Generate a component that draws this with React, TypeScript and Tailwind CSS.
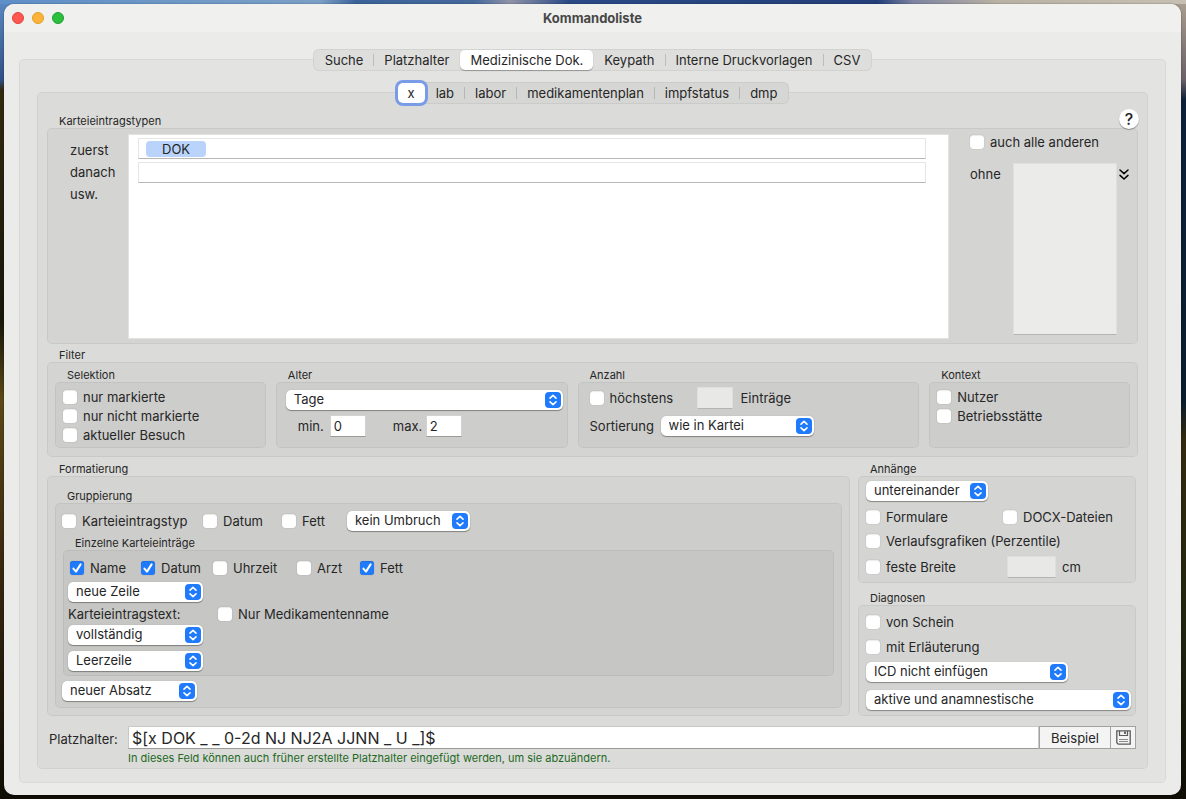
import { useId } from 'react';
import type { ReactNode } from 'react';
import { clsx } from 'clsx';

const MAIN_TABS = ['Suche', 'Platzhalter', 'Medizinische Dok.', 'Keypath', 'Interne Druckvorlagen', 'CSV'];
const SUB_TABS = ['x', 'lab', 'labor', 'medikamentenplan', 'impfstatus', 'dmp'];

interface TabBarProps {
  tabs: string[];
  active: string;
  focused?: boolean;
  label: string;
}

/** Segmented control that straddles the top edge of its frame */
function TabBar({ tabs, active, focused, label }: TabBarProps) {
  const activeIndex = tabs.indexOf(active);

  return (
    <div
      role="tablist"
      aria-label={label}
      className={clsx(
        'relative z-10 -mb-3 flex h-[22px] items-center self-center rounded-md border border-black/5 px-px',
        focused ? 'bg-[#d6d6d4]' : 'bg-[#dededc]'
      )}
    >
      {tabs.map((tab, i) => (
        <div key={tab} className="flex h-full items-center">
          {i > 0 && (
            <span
              className={clsx('h-3 w-px', i !== activeIndex && i !== activeIndex + 1 && 'bg-black/15')}
            />
          )}
          <button
            type="button"
            role="tab"
            aria-selected={tab === active}
            className={clsx(
              'h-5 rounded-[5px] px-2.5 whitespace-nowrap',
              tab === active && 'bg-white shadow-[0_1px_1px_rgba(0,0,0,0.3)]',
              tab === active && focused && 'ring-3 ring-[#7a9ce6]'
            )}
          >
            {tab}
          </button>
        </div>
      ))}
    </div>
  );
}

interface CheckProps {
  label: string;
  checked?: boolean;
  className?: string;
}

function Check({ label, checked, className }: CheckProps) {
  return (
    <label className={clsx('flex h-[19px] items-center gap-1.5 whitespace-nowrap', className)}>
      <span className="relative flex size-3.5 shrink-0">
        <input
          type="checkbox"
          defaultChecked={checked}
          className="peer size-3.5 appearance-none rounded-[3px] bg-white shadow-[0_0_1px_rgba(0,0,0,0.35),inset_0_1px_1px_rgba(0,0,0,0.08)] checked:bg-[#1f7bfb]"
        />
        <svg
          viewBox="0 0 14 14"
          className="pointer-events-none absolute inset-0 hidden size-3.5 peer-checked:block"
          fill="none"
          stroke="white"
          strokeWidth="2"
          strokeLinecap="round"
          strokeLinejoin="round"
          aria-hidden="true"
        >
          <path d="M3.4 7.6 6 10.6 10.6 3.4" />
        </svg>
      </span>
      {label}
    </label>
  );
}

interface SelectProps {
  value: string;
  label: string;
  className?: string;
}

function Select({ value, label, className }: SelectProps) {
  return (
    <div className={clsx('relative h-5', className)}>
      <select
        aria-label={label}
        className="block h-5 w-full appearance-none rounded-[5px] bg-white pr-6 pb-px pl-2 leading-[19px] shadow-[0_1px_1px_rgba(0,0,0,0.35),0_0_1px_rgba(0,0,0,0.25)]"
      >
        <option>{value}</option>
      </select>
      <svg
        viewBox="0 0 16 16"
        className="pointer-events-none absolute top-0.5 right-0.5 size-4 rounded-[4px] bg-[#1f7bfb]"
        fill="none"
        stroke="white"
        strokeWidth="1.6"
        strokeLinecap="round"
        strokeLinejoin="round"
        aria-hidden="true"
      >
        <path d="M5 6.2 8 3.4 11 6.2M5 9.8 8 12.6 11 9.8" />
      </svg>
    </div>
  );
}

interface GroupProps {
  title: string;
  className?: string;
  boxClassName?: string;
  children: ReactNode;
}

/** Titled group box; the tint adds up with every nesting level */
function Group({ title, className, boxClassName, children }: GroupProps) {
  const id = useId();

  return (
    <div role="group" aria-labelledby={id} className={clsx('flex flex-col', className)}>
      <h3 id={id} className="px-3 text-[11px] leading-[14px]">
        {title}
      </h3>
      <div className={clsx('grow rounded-[5px] border border-black/5 bg-black/[0.033]', boxClassName)}>
        {children}
      </div>
    </div>
  );
}

const FIELD = 'bg-white border border-[#d2d2d0] border-b-[#9a9a98]';
const DISABLED_FIELD = 'bg-[#e8e8e6] border border-[#dededc] border-b-[#b4b4b2]';

function EntryTypes() {
  return (
    <Group title="Karteieintragstypen" boxClassName="flex pt-[3px] pb-1">
      <div className="flex w-20 shrink-0 flex-col pt-[7px] pl-[22px] leading-[22px]">
        <span>zuerst</span>
        <span>danach</span>
        <span>usw.</span>
      </div>
      <div className="mt-0.5 flex h-[205px] grow flex-col gap-[3px] border border-[#e2e2e0] bg-white pt-[3px] pr-[22px] pl-[9px]">
        <div className="flex h-[21px] items-center border border-[#e6e6e4] border-b-[#b8b8b6] pl-[7px]">
          <span className="rounded-[4px] bg-[#b9d3fb] px-4 leading-4">DOK</span>
        </div>
        <input
          aria-label="danach"
          className="h-[21px] border border-[#e6e6e4] border-b-[#b8b8b6] px-2"
        />
      </div>
      <div className="ml-[21px] flex w-[167px] shrink-0 flex-col">
        <Check label="auch alle anderen" />
        <div className="mt-3 flex">
          <span className="w-[43px] leading-[22px]">ohne</span>
          <textarea
            aria-label="ohne"
            disabled
            className="h-[172px] w-[104px] resize-none border border-[#e0e0de] border-b-[#b4b4b2] bg-[#ebebe9]"
          />
          <button type="button" aria-label="Liste aufklappen" className="mt-1 flex h-4 w-3.5 items-center justify-center">
            <svg
              viewBox="0 0 12 14"
              className="h-3.5 w-3"
              fill="none"
              stroke="black"
              strokeWidth="1.5"
              strokeLinecap="round"
              strokeLinejoin="round"
              aria-hidden="true"
            >
              <path d="M2 2 6 5.6 10 2M2 7.4 6 11 10 7.4" />
            </svg>
          </button>
        </div>
      </div>
    </Group>
  );
}

function Filter() {
  return (
    <Group
      title="Filter"
      className="mt-1"
      boxClassName="grid grid-cols-[211fr_292fr_342fr_201fr] gap-2.5 px-[7px] pt-[5px] pb-2"
    >
      <Group title="Selektion" boxClassName="px-[7px] pt-1 pb-[3px]">
        <Check label="nur markierte" />
        <Check label="nur nicht markierte" />
        <Check label="aktueller Besuch" />
      </Group>
      <Group title="Alter" boxClassName="pt-[7px] pr-1 pl-[9px]">
        <Select value="Tage" label="Einheit" />
        <div className="mt-[5px] flex items-center pl-3">
          <label htmlFor="min" className="w-8">min.</label>
          <input id="min" defaultValue="0" className={clsx(FIELD, 'h-[22px] w-9 px-[3px]')} />
          <label htmlFor="max" className="ml-[27px] w-[33px]">max.</label>
          <input id="max" defaultValue="2" className={clsx(FIELD, 'h-[22px] w-9 px-[3px]')} />
        </div>
      </Group>
      <Group title="Anzahl" boxClassName="px-[11px] pt-1">
        <div className="flex items-center">
          <Check label="höchstens" className="w-[107px]" />
          <input aria-label="Anzahl Einträge" disabled className={clsx(DISABLED_FIELD, 'h-[22px] w-9')} />
          <span className="ml-2">Einträge</span>
        </div>
        <div className="mt-[7px] flex items-center">
          <span className="w-[71px]">Sortierung</span>
          <Select value="wie in Kartei" label="Sortierung" className="w-[153px]" />
        </div>
      </Group>
      <Group title="Kontext" boxClassName="px-[7px] pt-1">
        <Check label="Nutzer" />
        <Check label="Betriebsstätte" />
      </Group>
    </Group>
  );
}

function Formatting() {
  return (
    <Group title="Formatierung" className="grow" boxClassName="px-[7px] pt-3 pb-[7px]">
      <Group title="Gruppierung" boxClassName="px-1.5 pt-[7px] pb-1.5">
        <div className="flex items-center">
          <Check label="Karteieintragstyp" className="w-[141px]" />
          <Check label="Datum" className="w-[79px]" />
          <Check label="Fett" className="w-[65px]" />
          <Select value="kein Umbruch" label="Umbruch" className="w-[123px]" />
        </div>
        <Group title="Einzelne Karteieinträge" className="mx-px mt-[5px]" boxClassName="px-1 pt-[7px] pb-1">
          <div className="flex items-center pl-0.5">
            <Check label="Name" checked className="w-[71px]" />
            <Check label="Datum" checked className="w-[72px]" />
            <Check label="Uhrzeit" className="w-[84px]" />
            <Check label="Arzt" className="w-[63px]" />
            <Check label="Fett" checked />
          </div>
          <Select value="neue Zeile" label="Trennung nach Kopf" className="mt-[5px] w-[135px]" />
          <div className="mt-0.5 flex h-5 items-center">
            <span className="w-[150px]">Karteieintragstext:</span>
            <Check label="Nur Medikamentenname" />
          </div>
          <Select value="vollständig" label="Karteieintragstext" className="mt-px w-[135px]" />
          <Select value="Leerzeile" label="Trennung nach Eintrag" className="mt-1.5 w-[135px]" />
        </Group>
        <Select value="neuer Absatz" label="Trennung nach Gruppe" className="mt-[5px] w-[135px]" />
      </Group>
    </Group>
  );
}

function Attachments() {
  return (
    <Group title="Anhänge" boxClassName="px-[7px] py-1">
      <Select value="untereinander" label="Anordnung" className="w-[122px]" />
      <div className="mt-1.5 flex">
        <Check label="Formulare" className="w-[137px]" />
        <Check label="DOCX-Dateien" />
      </div>
      <Check label="Verlaufsgrafiken (Perzentile)" className="mt-[5px]" />
      <div className="mt-1.5 flex items-center">
        <Check label="feste Breite" className="w-[141px]" />
        <input aria-label="Breite in cm" disabled className={clsx(DISABLED_FIELD, 'h-[22px] w-[49px]')} />
        <span className="ml-1.5">cm</span>
      </div>
    </Group>
  );
}

function Diagnoses() {
  return (
    <Group title="Diagnosen" className="mt-2 grow" boxClassName="px-[7px] pt-1.5 pb-[5px]">
      <Check label="von Schein" />
      <Check label="mit Erläuterung" className="mt-1.5" />
      <Select value="ICD nicht einfügen" label="ICD" className="mt-1.5 w-[202px]" />
      <Select value="aktive und anamnestische" label="Diagnosestatus" className="mt-2 -mr-[3px]" />
    </Group>
  );
}

function PlaceholderRow() {
  return (
    <div className="mt-2.5 grid grid-cols-[81px_1fr] pr-0.5">
      <label htmlFor="placeholder" className="self-center pt-0.5 pl-0.5">
        Platzhalter:
      </label>
      <div className="flex h-[23px]">
        <input
          id="placeholder"
          defaultValue="$[x DOK _ _ 0-2d NJ NJ2A JJNN _ U _]$"
          className="min-w-0 grow border border-[#c8c8c6] border-b-[#9a9a98] bg-white px-[3px] text-base leading-5"
        />
        <button type="button" className="w-[72px] border border-[#a2a2a0] bg-[#f4f4f4]">
          Beispiel
        </button>
        <button
          type="button"
          aria-label="Speichern"
          className="flex w-[25px] items-center justify-center border border-l-0 border-[#a2a2a0] bg-[#f4f4f4]"
        >
          <svg viewBox="0 0 15 15" className="size-[15px]" fill="none" stroke="#5a5a5a" aria-hidden="true">
            <path d="M.8.8H14.2v13.4H2.2L.8 12.8z" strokeWidth="1.3" />
            <path d="M3.5 1v4.5h8V1" strokeWidth="1.2" />
            <path d="M9 1.5v2.6" strokeWidth="1.8" />
            <path d="M3 9.5h9M3 11.5h9" stroke="#8a8a8a" />
          </svg>
        </button>
      </div>
      <p className="col-start-2 mt-0.5 text-[11px] leading-[14px] text-[#1d6a1d]">
        In dieses Feld können auch früher erstellte Platzhalter eingefügt werden, um sie abzuändern.
      </p>
    </div>
  );
}

export default function App() {
  return (
    <div className="min-h-screen bg-[#0f0d06] bg-[linear-gradient(90deg,#5f8fc8,#7ba0c6_27%,#3b639a_30%,#46699c_40%,#8f93a8_43%,#2a4a86_48%,#233f7a_74%,#7d84a0_77%,#b9b1a4_84%,#c6bfb2)] bg-[length:100%_4px] bg-no-repeat">
      <div className="min-h-screen bg-[linear-gradient(180deg,transparent_4px,#a89c8e_4px,#6b6068_80px,#0e2038_100px,#0a1c2c_400px,#33290f_440px,#1e2410_640px,#0f0d06)] bg-[length:14px_100%] bg-right bg-no-repeat">
        <div className="flex min-h-screen bg-[linear-gradient(180deg,transparent_4px,#5a86c0_4px,#2f4f86_80px,#33290f_90px,#17160a_320px,#5a4816_400px,#3a2810_560px,#0f0d06)] bg-[length:14px_100%] bg-left bg-no-repeat py-1 pr-[5px] pl-1 font-[Inter,'Liberation_Sans',sans-serif] text-[13px] leading-4 text-[#262626]">
          <div className="flex grow flex-col rounded-[10px] bg-[#ebebe9] shadow-[0_0_2px_rgba(0,0,0,0.4)]">
            <header className="relative flex h-7 items-center justify-center rounded-t-[10px] bg-[#f0f0ee]">
              <div className="absolute left-2 flex gap-2">
                <button type="button" aria-label="Schließen" className="size-3 rounded-full border border-[#e0443e] bg-[#fe5850]" />
                <button type="button" aria-label="Minimieren" className="size-3 rounded-full border border-[#dfa023] bg-[#fdb239]" />
                <button type="button" aria-label="Zoomen" className="size-3 rounded-full border border-[#1f9f30] bg-[#2bbf3e]" />
              </div>
              <h1 className="font-bold text-[#474747]">Kommandoliste</h1>
            </header>

            <main className="flex grow flex-col px-[15px] pt-[17px] pb-3">
              <TabBar tabs={MAIN_TABS} active="Medizinische Dok." label="Bereiche" />
              <div className="flex grow flex-col rounded-[5px] border border-black/5 bg-black/[0.033] px-[17px] pt-[22px] pb-[13px]">
                <TabBar tabs={SUB_TABS} active="x" focused label="Kommandos" />
                <div className="relative flex grow flex-col rounded-[5px] border border-black/5 bg-black/[0.033] px-[9px] pt-[21px] pb-[3px]">
                  <button
                    type="button"
                    aria-label="Hilfe"
                    className="absolute top-4 right-2 size-5 rounded-full bg-white text-base leading-5 font-medium shadow-[0_1px_1px_rgba(0,0,0,0.35)]"
                  >
                    ?
                  </button>
                  <EntryTypes />
                  <Filter />
                  <div className="mt-[5px] flex gap-2 pr-0.5">
                    <Formatting />
                    <div className="flex w-[278px] shrink-0 flex-col">
                      <Attachments />
                      <Diagnoses />
                    </div>
                  </div>
                  <PlaceholderRow />
                </div>
              </div>
            </main>
          </div>
        </div>
      </div>
    </div>
  );
}
